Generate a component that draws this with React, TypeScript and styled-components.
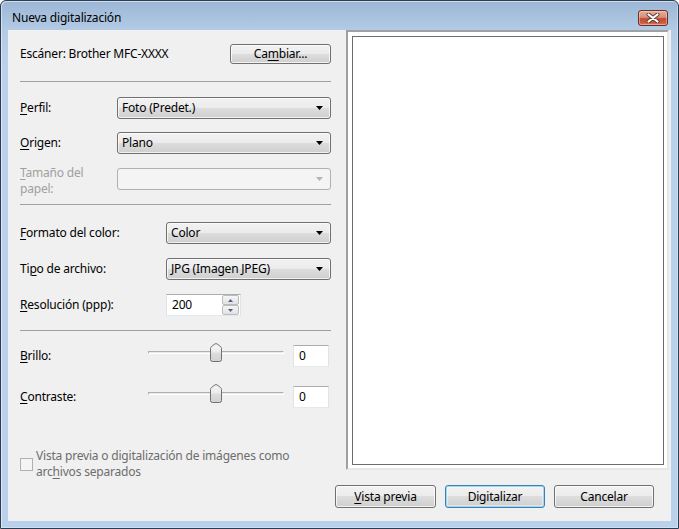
import React from "react";
import styled, { createGlobalStyle } from "styled-components";

const Global = createGlobalStyle`
  html, body { margin: 0; padding: 0; background: #ffffff; }
  body {
    font-family: "Noto Sans", "Segoe UI", sans-serif;
    font-size: 12px;
    letter-spacing: -0.2px;
    color: #000;
  }
  #root { width: 679px; height: 529px; }
  u { text-underline-offset: 2px; text-decoration-thickness: 1px; }
`;

const Window = styled.div`
  box-sizing: border-box;
  width: 679px;
  height: 529px;
  border: 1px solid #2b3d50;
  border-radius: 6px 6px 0 0;
  background: linear-gradient(to bottom, #9bb6d5 0px, #b2cae4 28px, #b9d1ea 60px, #b9d1ea 100%);
  box-shadow: inset 1px 1px 0 rgba(255, 255, 255, 0.5), inset -1px -1px 0 rgba(255, 255, 255, 0.35);
  display: flex;
  flex-direction: column;
  overflow: hidden;
`;

const TitleBar = styled.div`
  height: 29px;
  box-sizing: border-box;
  display: flex;
  align-items: center;
  padding: 5px 10px 0 11px;
`;

const TitleText = styled.div`
  font-size: 12px;
  color: #000;
  line-height: 16px;
`;

const CloseButton = styled.div`
  margin-left: auto;
  width: 30px;
  height: 16px;
  box-sizing: border-box;
  border: 1px solid #6b2f25;
  border-radius: 3px;
  background: linear-gradient(#e6ad9d 0%, #d98f7c 45%, #c34b31 55%, #c95a3d 80%, #d9795c 100%);
  box-shadow: inset 0 0 0 1px rgba(255, 220, 210, 0.45);
  display: flex;
  align-items: center;
  justify-content: center;
`;

const Client = styled.div`
  flex: 1;
  margin: 0 7px 7px 7px;
  background: #f0f0f0;
  display: grid;
  grid-template-columns: 327px 1fr;
  grid-template-rows: 440px 1fr;
`;

const LeftPanel = styled.div`
  grid-column: 1;
  grid-row: 1 / 3;
  box-sizing: border-box;
  padding: 14px 4px 0 12px;
  display: flex;
  flex-direction: column;
`;

const Row = styled.div<{ $mt?: number; $h?: number }>`
  display: flex;
  align-items: center;
  height: ${(p) => p.$h ?? 22}px;
  margin-top: ${(p) => p.$mt ?? 0}px;
`;

const Separator = styled.div<{ $mt: number }>`
  height: 1px;
  background: #a0a0a0;
  margin-top: ${(p) => p.$mt}px;
`;

const Label = styled.div<{ $w?: number; $disabled?: boolean; $shift?: number }>`
  flex: 0 0 ${(p) => (p.$w ? `${p.$w}px` : "auto")};
  color: ${(p) => (p.$disabled ? "#a0a0a0" : "#000")};
  line-height: 16px;
  margin-top: ${(p) => p.$shift ?? 0}px;
`;

const PushButton = styled.div<{ $w: number; $h: number; $default?: boolean; $push?: boolean }>`
  width: ${(p) => p.$w}px;
  height: ${(p) => p.$h}px;
  box-sizing: border-box;
  border: 1px solid ${(p) => (p.$default ? "#3c7fb1" : "#707070")};
  border-radius: 3px;
  background: linear-gradient(#f2f2f2 0%, #ebebeb 50%, #dddddd 50%, #cfcfcf 100%);
  box-shadow: ${(p) =>
    p.$default ? "inset 0 0 0 1px #9ed8f3, inset 0 0 0 2px rgba(255,255,255,0.4)" : "inset 0 0 0 1px rgba(255,255,255,0.75)"};
  display: flex;
  align-items: center;
  justify-content: center;
  color: #000;
  line-height: 16px;
  margin-left: ${(p) => (p.$push ? "auto" : "0")};
`;

const Combo = styled.div<{ $disabled?: boolean }>`
  flex: 1;
  height: 22px;
  box-sizing: border-box;
  border: 1px solid ${(p) => (p.$disabled ? "#adb2b5" : "#707070")};
  border-radius: 3px;
  background: ${(p) =>
    p.$disabled ? "#f4f4f4" : "linear-gradient(#f2f2f2 0%, #ebebeb 50%, #dddddd 50%, #cfcfcf 100%)"};
  box-shadow: ${(p) => (p.$disabled ? "none" : "inset 0 0 0 1px rgba(255,255,255,0.7)")};
  display: flex;
  align-items: center;
  padding: 0 4px 0 4px;
  line-height: 16px;
`;

const ComboText = styled.span`
  flex: 1;
`;

const TextBox = styled.div<{ $w: number }>`
  width: ${(p) => p.$w}px;
  height: 22px;
  box-sizing: border-box;
  background: #fff;
  border: 1px solid #e2e3ea;
  border-top-color: #abadb3;
  border-bottom-color: #e3e9ef;
  display: flex;
  align-items: center;
  padding-left: 5px;
  line-height: 16px;
`;

const SpinBox = styled.div`
  width: 75px;
  height: 22px;
  box-sizing: border-box;
  background: #fff;
  border: 1px solid #e2e3ea;
  border-top-color: #abadb3;
  border-bottom-color: #e3e9ef;
  display: flex;
  align-items: stretch;
  padding: 0 1px 0 5px;
`;

const SpinValue = styled.div`
  flex: 1;
  display: flex;
  align-items: center;
  line-height: 16px;
`;

const SpinButtons = styled.div`
  width: 17px;
  display: flex;
  flex-direction: column;
`;

const SpinBtn = styled.div`
  flex: 1;
  box-sizing: border-box;
  border: 1px solid #bcbcbc;
  border-radius: 2px;
  background: linear-gradient(#f6f6f6, #e1e1e1);
  display: flex;
  align-items: center;
  justify-content: center;
`;

const SliderBox = styled.div`
  flex: 0 0 136px;
  height: 22px;
  position: relative;
  margin-right: 9px;
`;

const Track = styled.div`
  margin-top: 6px;
  height: 1px;
  background: #e7eaea;
  border: 1px solid;
  border-color: #b0b0b0 #ffffff #ffffff #b0b0b0;
`;

const Thumb = styled.svg`
  position: absolute;
  top: -2px;
  left: calc(50% - 6px);
`;

const CheckRow = styled.div<{ $mt: number }>`
  display: flex;
  align-items: center;
  gap: 3px;
  margin-top: ${(p) => p.$mt}px;
`;

const CheckBox = styled.div`
  width: 13px;
  height: 13px;
  box-sizing: border-box;
  border: 1px solid #b1b1b1;
  background: #f4f4f4;
  flex: 0 0 13px;
`;

const CheckText = styled.div`
  color: #6d6d6d;
  line-height: 16px;
`;

const PreviewFrame = styled.div`
  grid-column: 2;
  grid-row: 1;
  margin: 0 2px 0 11px;
  box-sizing: border-box;
  border: 2px solid;
  border-color: #a0a0a0 #e8e8e8 #e8e8e8 #a0a0a0;
  background: #fff;
  padding: 4px 3px 3px 4px;
`;

const PreviewPane = styled.div`
  height: 100%;
  box-sizing: border-box;
  border: 1px solid #6d6d6d;
  background: #fff;
`;

const ButtonRow = styled.div`
  grid-column: 2;
  grid-row: 2;
  display: flex;
  justify-content: flex-end;
  align-items: flex-start;
  gap: 9px;
  padding: 15px 17px 0 0;
`;

const Arrow = ({ disabled }: { disabled?: boolean }) => (
  <svg width="7" height="4" viewBox="0 0 7 4" style={{ display: "block", marginRight: 3 }}>
    <polygon points="0,0 7,0 3.5,4" fill={disabled ? "#b4b4b4" : "#000"} />
  </svg>
);

const SmallTri = ({ up }: { up?: boolean }) => (
  <svg width="5" height="3" viewBox="0 0 5 3" style={{ display: "block" }}>
    <polygon points={up ? "0,3 5,3 2.5,0" : "0,0 5,0 2.5,3"} fill="#4d6185" />
  </svg>
);

const ThumbShape = () => (
  <Thumb width="12" height="19" viewBox="0 0 12 19">
    <defs>
      <linearGradient id="tg" x1="0" y1="0" x2="0" y2="1">
        <stop offset="0" stopColor="#f7f7f7" />
        <stop offset="0.45" stopColor="#ececec" />
        <stop offset="0.55" stopColor="#dcdcdc" />
        <stop offset="1" stopColor="#d2d2d2" />
      </linearGradient>
    </defs>
    <path
      d="M0.5 5.5 Q0.5 4.5 1.5 3.5 L5 0.9 Q6 0.3 7 0.9 L10.5 3.5 Q11.5 4.5 11.5 5.5 L11.5 16.5 Q11.5 18.5 9.5 18.5 L2.5 18.5 Q0.5 18.5 0.5 16.5 Z"
      fill="url(#tg)"
      stroke="#707070"
      strokeWidth="1"
    />
  </Thumb>
);

export default function App() {
  return (
    <>
      <Global />
      <Window>
        <TitleBar>
          <TitleText>Nueva digitalización</TitleText>
          <CloseButton>
            <svg width="14" height="10" viewBox="0 0 14 10">
              <path d="M2.5 1.5 L11.5 8.5 M11.5 1.5 L2.5 8.5" stroke="#5b3a34" strokeWidth="4" strokeLinecap="round" />
              <path d="M2.5 1.5 L11.5 8.5 M11.5 1.5 L2.5 8.5" stroke="#ffffff" strokeWidth="2.2" strokeLinecap="round" />
            </svg>
          </CloseButton>
        </TitleBar>
        <Client>
          <LeftPanel>
            <Row $h={20}>
              <Label>Escáner: Brother MFC-XXXX</Label>
              <PushButton $w={101} $h={20} $push>
                <span>
                  Ca<u>m</u>biar...
                </span>
              </PushButton>
            </Row>
            <Separator $mt={17} />
            <Row $mt={15}>
              <Label $w={97}>
                <u>P</u>erfil:
              </Label>
              <Combo>
                <ComboText>Foto (Predet.)</ComboText>
                <Arrow />
              </Combo>
            </Row>
            <Row $mt={13}>
              <Label $w={97}>
                <u>O</u>rigen:
              </Label>
              <Combo>
                <ComboText>Plano</ComboText>
                <Arrow />
              </Combo>
            </Row>
            <Row $mt={14}>
              <Label $w={97} $disabled $shift={4}>
                <u>T</u>amaño del
                <br />
                papel:
              </Label>
              <Combo $disabled>
                <ComboText />
                <Arrow disabled />
              </Combo>
            </Row>
            <Separator $mt={14} />
            <Row $mt={17}>
              <Label $w={146}>
                <u>F</u>ormato del color:
              </Label>
              <Combo>
                <ComboText>Color</ComboText>
                <Arrow />
              </Combo>
            </Row>
            <Row $mt={14}>
              <Label $w={146}>
                Ti<u>p</u>o de archivo:
              </Label>
              <Combo>
                <ComboText>JPG (Imagen JPEG)</ComboText>
                <Arrow />
              </Combo>
            </Row>
            <Row $mt={14}>
              <Label $w={146}>
                <u>R</u>esolución (ppp):
              </Label>
              <SpinBox>
                <SpinValue>200</SpinValue>
                <SpinButtons>
                  <SpinBtn>
                    <SmallTri up />
                  </SpinBtn>
                  <SpinBtn>
                    <SmallTri />
                  </SpinBtn>
                </SpinButtons>
              </SpinBox>
            </Row>
            <Separator $mt={14} />
            <Row $mt={14}>
              <Label $w={128}>
                <u>B</u>rillo:
              </Label>
              <SliderBox>
                <Track />
                <ThumbShape />
              </SliderBox>
              <TextBox $w={36}>0</TextBox>
            </Row>
            <Row $mt={19}>
              <Label $w={128}>
                <u>C</u>ontraste:
              </Label>
              <SliderBox>
                <Track />
                <ThumbShape />
              </SliderBox>
              <TextBox $w={36}>0</TextBox>
            </Row>
            <CheckRow $mt={40}>
              <CheckBox />
              <CheckText>
                Vista previa o digitalización de imágenes como
                <br />
                arc<u>h</u>ivos separados
              </CheckText>
            </CheckRow>
          </LeftPanel>
          <PreviewFrame>
            <PreviewPane />
          </PreviewFrame>
          <ButtonRow>
            <PushButton $w={101} $h={23}>
              <span>
                <u>V</u>ista previa
              </span>
            </PushButton>
            <PushButton $w={100} $h={23} $default>
              Digitalizar
            </PushButton>
            <PushButton $w={100} $h={23}>
              Cancelar
            </PushButton>
          </ButtonRow>
        </Client>
      </Window>
    </>
  );
}
